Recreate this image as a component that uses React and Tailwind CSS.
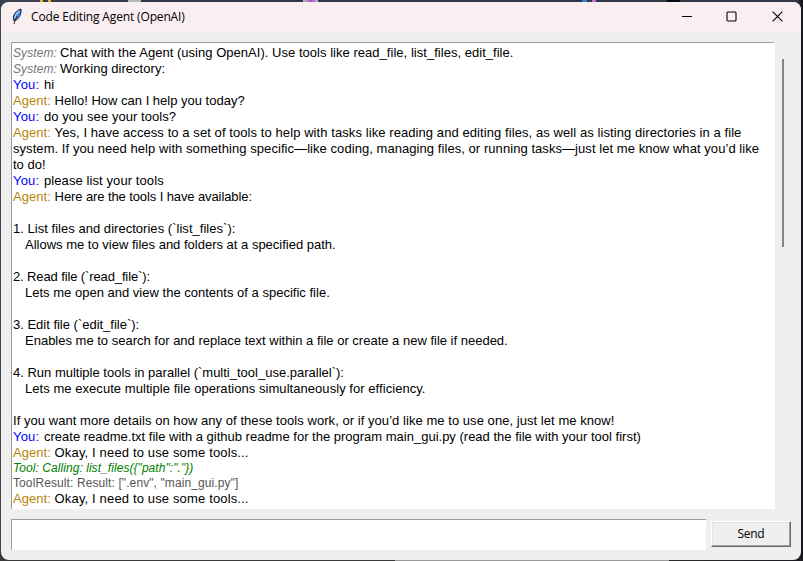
const you = { label: "You:", color: "text-[#0000ff]", gap: "w-[31px] tracking-[0.2px]" };
const agent = { label: "Agent:", color: "text-[#b8860b]", gap: "w-[41.6px] tracking-[0.05px]" };
const system = { label: "System:", color: "text-[#757575] italic text-[12px]", gap: "w-[47px] tracking-[0.1px]" };

const lines = [
  { who: system, text: "Chat with the Agent (using OpenAI). Use tools like read_file, list_files, edit_file.", cls: "tracking-[0.03px]" },
  { who: system, text: "Working directory:", cls: "tracking-[0.03px]" },
  { who: you, text: "hi" },
  { who: agent, text: "Hello! How can I help you today?" },
  { who: you, text: "do you see your tools?", cls: "tracking-[0.06px]" },
  { who: agent, text: "Yes, I have access to a set of tools to help with tasks like reading and editing files, as well as listing directories in a file", cls: "tracking-[0.08px]" },
  { text: "system. If you need help with something specific—like coding, managing files, or running tasks—just let me know what you’d like", cls: "tracking-[0.06px]" },
  { text: "to do!" },
  { who: you, text: "please list your tools", cls: "tracking-[0.09px]" },
  { who: agent, text: "Here are the tools I have available:", cls: "tracking-[-0.1px]" },
  { text: "" },
  { text: "1. List files and directories (`list_files`):", cls: "tracking-[0.03px]" },
  { text: "Allows me to view files and folders at a specified path.", cls: "pl-3" },
  { text: "" },
  { text: "2. Read file (`read_file`):", cls: "tracking-[-0.12px]" },
  { text: "Lets me open and view the contents of a specific file.", cls: "pl-3 tracking-[0.01px]" },
  { text: "" },
  { text: "3. Edit file (`edit_file`):", cls: "tracking-[-0.01px]" },
  { text: "Enables me to search for and replace text within a file or create a new file if needed.", cls: "pl-3" },
  { text: "" },
  { text: "4. Run multiple tools in parallel (`multi_tool_use.parallel`):" },
  { text: "Lets me execute multiple file operations simultaneously for efficiency.", cls: "pl-3 tracking-[0.05px]" },
  { text: "" },
  { text: "If you want more details on how any of these tools work, or if you’d like me to use one, just let me know!", cls: "tracking-[0.05px]" },
  { who: you, text: "create readme.txt file with a github readme for the program main_gui.py (read the file with your tool first)" },
  { who: agent, text: "Okay, I need to use some tools...", cls: "tracking-[0.15px]" },
  { text: 'Tool: Calling: list_files({"path":"."})', small: true, cls: "italic text-[#008000] tracking-[0.06px]" },
  { text: 'ToolResult: Result: [".env", "main_gui.py"]', small: true, cls: "text-[#555555] tracking-[0.1px]" },
  { who: agent, text: "Okay, I need to use some tools...", cls: "tracking-[0.15px]" },
];

function Line({ who, text, small, cls = "" }) {
  return (
    <div className={small ? "flex h-[15px] text-[12px] leading-[15px]" : "flex h-4 text-[13px] leading-4"}>
      {who && <span className={`shrink-0 ${who.gap} ${who.color} leading-4`}>{who.label}</span>}
      <span className={cls}>{text}</span>
    </div>
  );
}

function FeatherIcon() {
  return (
    <svg width="12" height="17" viewBox="0 0 12 17" className="ml-[10px] mt-[-1px]">
      <path d="M10 1 C7 1.6 3.4 4.8 2.6 8 C2.2 9.8 2.3 11.4 3 12.8 L5.2 12 C8 10 9.6 7 10 4.4 Z" fill="#4a8be0" stroke="#0b0f18" strokeWidth="0.9" />
      <path d="M8.4 2.8 C6 4.8 4.2 7.4 3.7 10.4" fill="none" stroke="#a9d2f8" strokeWidth="1.2" />
      <path d="M6 8 C4.6 10.6 3.6 13 3 16" fill="none" stroke="#10151f" strokeWidth="0.9" />
    </svg>
  );
}

export default function App() {
  return (
    <div className="flex h-[561px] w-[803px] flex-col overflow-hidden bg-[linear-gradient(to_right,#39393b_395px,#9a9a9a_395px,#9a9a9a_669px,#2b2b2d_669px,#1b1c20_100%)] font-['Liberation_Sans',Arial,sans-serif] text-black">
      <div className="h-[10px] shrink-0 bg-[linear-gradient(to_right,#3a4152_40px,#d8b420_40px,#d8b420_43px,#343b4c_43px,#343b4c_48px,#d8b420_48px,#d8b420_51px,#343b4c_51px,#343b4c_128px,#b5b5b5_128px,#b5b5b5_141px,#2f3646_141px,#2f3646_303px,#c9b8d4_303px,#a050b8_311px,#c9b8d4_318px,#2f3646_318px,#2f3646_582px,#2f80d8_582px,#2f80d8_587px,#2f3646_587px,#2f3646_592px,#c070d0_592px,#c070d0_596px,#2f3646_596px,#2f3646_667px,#0c0c0e_667px,#0c0c0e_680px,#2f3646_680px,#2f3646_798px,#14161c_801px)]" />
      <div className="mt-[-8px] flex h-[558px] w-[803px] shrink-0 bg-[linear-gradient(to_right,transparent_801px,#15171c_801px)]">
        <div className="w-px shrink-0 bg-[linear-gradient(to_bottom,transparent_8px,#45474d_8px,#45474d_548px,transparent_548px)]" />
        <main className="flex w-[800px] flex-col overflow-hidden rounded-lg bg-[#efefef]">
          <header className="flex h-[30px] shrink-0 items-center bg-[#f9eef0]">
            <FeatherIcon />
            <h1 className="ml-2 flex-1 whitespace-nowrap font-['Open_Sans',sans-serif] text-[12px] leading-4 tracking-[-0.15px] text-black">Code Editing Agent (OpenAI)</h1>
            <svg width="11" height="11" viewBox="0 0 11 11" className="mr-[34px] mt-[-2px]" shapeRendering="crispEdges">
              <path d="M0.5 5.5H10.5" stroke="#000" />
            </svg>
            <svg width="11" height="11" viewBox="0 0 11 11" className="mr-[35px] mt-[-2px]">
              <rect x="1" y="1" width="9" height="9" rx="1" fill="none" stroke="#000" strokeWidth="1.1" />
            </svg>
            <svg width="11" height="11" viewBox="0 0 11 11" className="mr-[18px] mt-[-2px]">
              <path d="M0.6 0.6L10.4 10.4M10.4 0.6L0.6 10.4" stroke="#000" strokeWidth="1.1" />
            </svg>
          </header>
          <div className="flex pl-[10px] pt-[10px]">
            <div className="h-[467px] w-[764px] whitespace-pre border-l border-t border-[#9b9b9b] bg-white pl-px pt-[2px] [border-right:2px_solid_#fff]">
              {lines.map((line, i) => (
                <Line key={i} {...line} />
              ))}
            </div>
            <div className="ml-[7px] mt-[17px] h-[188px] w-[2px] bg-[#868686]" />
          </div>
          <form className="mt-[10px] flex items-start pl-[10px]">
            <input className="h-[31px] w-[695px] border-l border-t border-[#9b9b9b] bg-white px-1 text-[13px] outline-none" />
            <button type="button" className="ml-[5px] mt-[2px] h-[26px] w-[80px] border border-b-[#696969] border-l-white border-r-[#696969] border-t-white bg-[#efefef] font-['Open_Sans',sans-serif] text-[12px] leading-4 tracking-[-0.3px] shadow-[inset_-1px_-1px_0_#a0a0a0,inset_1px_1px_0_#e3e3e3]">
              Send
            </button>
          </form>
        </main>
      </div>
    </div>
  );
}
